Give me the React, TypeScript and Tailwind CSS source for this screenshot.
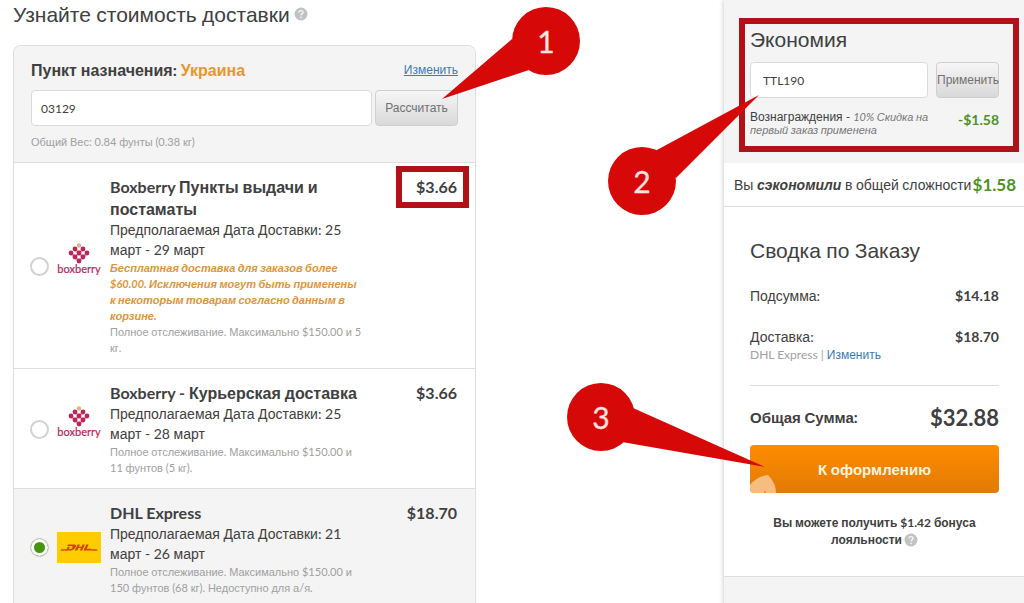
import React from 'react';
import { clsx } from 'clsx';

interface ShippingOption {
  id: string;
  title: string;
  dates: string;
  promo?: string;
  note: string;
  price: string;
  carrier: 'boxberry' | 'dhl';
  highlighted?: boolean;
}

const options: ShippingOption[] = [
  {
    id: 'pickup',
    title: 'Boxberry Пункты выдачи и постаматы',
    dates: 'Предполагаемая Дата Доставки: 25 март - 29 март',
    promo:
      'Бесплатная доставка для заказов более $60.00. Исключения могут быть применены к\u00a0некоторым товарам согласно данным в корзине.',
    note: 'Полное отслеживание. Максимально $150.00 и 5 кг.',
    price: '$3.66',
    carrier: 'boxberry',
    highlighted: true,
  },
  {
    id: 'courier',
    title: 'Boxberry - Курьерская доставка',
    dates: 'Предполагаемая Дата Доставки: 25 март - 28 март',
    note: 'Полное отслеживание. Максимально $150.00 и 11\u00a0фунтов (5 кг).',
    price: '$3.66',
    carrier: 'boxberry',
  },
  {
    id: 'dhl',
    title: 'DHL Express',
    dates: 'Предполагаемая Дата Доставки: 21 март - 26 март',
    note: 'Полное отслеживание. Максимально $150.00 и 150\u00a0фунтов (68 кг). Недоступно для а/я.',
    price: '$18.70',
    carrier: 'dhl',
  },
];

// Latin and digits are set in Lato, Cyrillic words in Liberation Sans
const Mixed: React.FC<{ text: string }> = ({ text }) => (
  <>
    {text.split(/([А-Яа-яЁё]+)/).map((part, i) =>
      i % 2 === 1 ? (
        <span key={i} className="leading-none font-['Liberation_Sans',sans-serif]">{part}</span>
      ) : (
        part
      )
    )}
  </>
);

const BoxberryLogo: React.FC = () => {
  const dots = [
    [18, 8], [26, 8], [14, 12], [22, 12], [30, 12], [18, 16], [26, 16], [22, 20],
  ];
  return (
    <svg viewBox="0 2 44 46" className="w-11 h-[46px]" role="img" aria-label="boxberry">
      <path d="M18 8l8 8M26 8l-8 8M14 12l8 8M30 12l-8 8" stroke="#eba3bb" strokeWidth="2.5" />
      <circle cx="22" cy="4.500" r="2.200" fill="#dcb878" />
      {dots.map(([cx, cy]) => (
        <circle key={`${cx}-${cy}`} cx={cx} cy={cy} r="2.400" fill="#bd2459" />
      ))}
      <text x="22" y="32" textAnchor="middle" fontSize="11" fill="#b8265d" stroke="#b8265d" strokeWidth="0.2" fontFamily="Lato, sans-serif">
        boxberry
      </text>
    </svg>
  );
};

const DhlLogo: React.FC = () => (
  <svg viewBox="0 0 44 31" className="w-11 h-[31px]" role="img" aria-label="DHL">
    <rect width="44" height="31" fill="#fc0" />
    <path d="M4 17.5h6M3.5 18.5h6M34 17.5h6M33.5 18.5h7" stroke="#d8401a" strokeWidth="0.7" />
    <g transform="translate(9 12.5)" fill="#d8401a">
      <path d="M2 0h6.5q2.2 0 1.2 2.6T5.5 6H0l1.8-3.8h2L3 4.6h1.6q1.2 0 1.8-1.5T6 1.6H1.3z" />
      <path d="M11.5 0h2.4l-1 2.2h2.6l1-2.2h2.4L16.2 6h-2.4l1.1-2.4h-2.6L11.2 6H8.8z" />
      <path d="M20.3 0h2.4l-2 4.3h4.5L24.5 6h-7z" />
    </g>
  </svg>
);

const HelpIcon: React.FC = () => (
  <svg viewBox="0 0 14 14" className="inline-block w-3.5 h-3.5" aria-hidden="true">
    <circle cx="7" cy="7" r="6.5" fill="#c2c2c2" />
    <path d="M5 5.6q0-2 2-2t2 1.8q0 1-1.2 1.6Q7 7.4 7 8.3" fill="none" stroke="#f4f4f4" strokeWidth="1.4" />
    <circle cx="7" cy="10.3" r="0.9" fill="#f4f4f4" />
  </svg>
);

interface CalloutProps {
  label: string;
  cx: number;
  cy: number;
  pointer: string;
}

const Callout: React.FC<CalloutProps> = ({ label, cx, cy, pointer }) => (
  <g>
    <polygon points={pointer} fill="#d60808" />
    <circle cx={cx} cy={cy} r="34" fill="#d60808" />
    <text x={cx} y={cy + 12} textAnchor="middle" fontSize="30" fill="#fbe4e0" stroke="#fbe4e0" strokeWidth="0.3" fontFamily="Lato, sans-serif">
      {label}
    </text>
  </g>
);

const OptionRow: React.FC<{ option: ShippingOption }> = ({ option }) => (
  <label
    htmlFor={option.id}
    className="flex items-center gap-2 border-t border-[#dedede] pt-[13px] pb-3 pl-4 pr-[18px] last:grow last:items-start has-checked:bg-[#f4f4f4] group"
  >
    <input
      type="radio"
      id={option.id}
      name="shipping"
      defaultChecked={option.id === 'dhl'}
      className="appearance-none w-[19px] h-[19px] shrink-0 rounded-full border-2 border-[#d2d2d2] bg-white checked:bg-[#45960f] checked:border checked:shadow-[inset_0_0_0_3px_#fff] group-last:mt-9"
    />
    <span className="w-11 shrink-0 group-last:mt-[30px]">
      {option.carrier === 'boxberry' ? <BoxberryLogo /> : <DhlLogo />}
    </span>
    <span className="flex flex-1 items-start justify-between self-stretch">
      <span className="block w-[258px] ml-px">
        <span className="block text-[16px] leading-[22px] font-bold">
          <Mixed text={option.title} />
        </span>
        <span className="block w-[240px] text-[14px] leading-5">
          <Mixed text={option.dates} />
        </span>
        {option.promo && (
          <span className="block text-[11px] leading-4 font-bold italic text-[#dc963c]">
            <Mixed text={option.promo} />
          </span>
        )}
        <span className="block text-[11px] leading-4 text-[#a0a0a0]">
          <Mixed text={option.note} />
        </span>
      </span>
      <span className="relative text-[16px] leading-[22px] font-bold">
        {option.price}
        {option.highlighted && (
          <span className="absolute -left-5 -right-3 -top-[10px] -bottom-[10px] border-6 border-[#b01217]" />
        )}
      </span>
    </span>
  </label>
);

const buttonClass =
  "h-9 rounded border border-[#cfcfcf] bg-linear-to-b from-[#f6f6f6] to-[#d9d9d9] text-[#707070] whitespace-nowrap font-['Liberation_Sans',sans-serif]";

const ShippingCalculator: React.FC = () => (
  <main className="flex flex-col">
    <h1 className="flex items-center gap-1 h-7 mb-[17px] text-[21px] leading-7 whitespace-nowrap">
      <span>
        <Mixed text="Узнайте стоимость доставки" />
      </span>
      <HelpIcon />
    </h1>
    <section className="flex flex-col grow border border-b-0 border-[#dedede] rounded-t-lg bg-white overflow-hidden">
      <div className="bg-[#f4f4f4] pt-3 px-[17px] pb-3">
        <div className="flex items-center justify-between h-6 mb-2">
          <label htmlFor="zip" className="text-[16px] font-bold">
            <Mixed text="Пункт назначения: " />
            <span className="text-[#e8962e]">
              <Mixed text="Украина" />
            </span>
          </label>
          <a href="#country" className="text-[12px] text-[#3d79b5] underline">
            <Mixed text="Изменить" />
          </a>
        </div>
        <div className="flex gap-[3px] mb-2">
          <input
            id="zip"
            defaultValue="03129"
            className="grow min-w-0 h-9 px-[9px] rounded border border-[#dadada] bg-white text-[12px]"
          />
          <button type="button" className={clsx(buttonClass, 'w-[83px] text-[12px]')}>Рассчитать</button>
        </div>
        <p className="text-[11px] leading-4 text-[#a0a0a0]">
          <Mixed text="Общий Вес: 0.84 фунты (0.38 кг)" />
        </p>
      </div>
      {options.map((option) => (
        <OptionRow key={option.id} option={option} />
      ))}
    </section>
  </main>
);

const OrderSummary: React.FC = () => (
  <aside className="col-start-3 flex flex-col bg-[#f4f4f4] shadow-[-1px_0_4px_rgba(0,0,0,0.18)]">
    <section className="relative pt-6 pb-[27px] pl-[26px] pr-[25px]">
      <h2 className="text-[21px] leading-[30px] mb-2">
        <label htmlFor="coupon">
          <Mixed text="Экономия" />
        </label>
      </h2>
      <div className="flex gap-2 mb-3">
        <input
          id="coupon"
          defaultValue="TTL190"
          className="grow min-w-0 h-9 px-3 rounded border border-[#dadada] bg-white text-[12px]"
        />
        <button type="button" className={clsx(buttonClass, 'w-[63px] text-[12px]')}>Применить</button>
      </div>
      <div className="flex justify-between">
        <p className="w-[185px] text-[12px] leading-[13px]">
          <Mixed text="Вознаграждения - " />
          <em className="text-[11px] leading-none text-[#777]">
            <Mixed text="10% Скидка на первый заказ применена" />
          </em>
        </p>
        <span className="text-[14px] leading-5 font-bold text-[#4f9124]">-$1.58</span>
      </div>
      <div className="absolute left-[15px] right-[5px] top-[18px] bottom-[11px] border-6 border-[#b01217] pointer-events-none" />
    </section>
    <p className="h-11 pl-2.5 pr-2 flex items-center justify-between bg-white border-b border-[#dedede] whitespace-nowrap">
      <span className="text-[14px]">
        <Mixed text="Вы " />
        <strong className="italic">
          <Mixed text="сэкономили" />
        </strong>
        <Mixed text=" в общей сложности" />
      </span>
      <span className="text-[17px] font-bold text-[#4f9124]">$1.58</span>
    </p>
    <section className="bg-white border-b border-[#dedede] pt-7 pb-7 pl-[26px] pr-[25px]">
      <h2 className="text-[21px] leading-[30px] mb-[21px]">
        <Mixed text="Сводка по Заказу" />
      </h2>
      <dl className="text-[14px] leading-5">
        <div className="flex justify-between mb-[21px]">
          <dt><Mixed text="Подсумма:" /></dt>
          <dd className="font-bold">$14.18</dd>
        </div>
        <div className="flex justify-between">
          <dt><Mixed text="Доставка:" /></dt>
          <dd className="font-bold">$18.70</dd>
        </div>
      </dl>
      <p className="text-[12px] leading-4 text-[#a0a0a0] pb-[22px] mb-[17px] border-b border-[#dedede]">
        DHL Express |{' '}
        <a href="#shipping" className="text-[#3d79b5]">
          <Mixed text="Изменить" />
        </a>
      </p>
      <div className="flex items-center justify-between h-7 mb-[14px] font-bold">
        <span className="text-[15px]">
          <Mixed text="Общая Сумма:" />
        </span>
        <span className="text-[22px]">$32.88</span>
      </div>
      <button
        type="button"
        className="relative block w-full h-12 rounded-sm overflow-hidden bg-linear-to-b from-[#fe8c00] to-[#e27a04] text-[15px] text-[#fff4dc] font-bold"
      >
        <Mixed text="К оформлению" />
        <svg viewBox="0 0 26 18" className="absolute left-0 bottom-0 w-[26px] h-[18px]" aria-hidden="true">
          <path d="M0 10Q7 1 18 0q8 8 8 18H0z" fill="#f6bd80" />
          <path d="M14 18l1-3 1 3z" fill="#e88a24" />
        </svg>
      </button>
      <p className="mt-[21px] text-center text-[12px] leading-[17px] font-bold">
        <Mixed text="Вы можете получить $1.42 бонуса" />
        <br />
        <span className="inline-flex items-center gap-0.5">
          <Mixed text="лояльности" />
          <HelpIcon />
        </span>
      </p>
    </section>
  </aside>
);

export default function App() {
  return (
    <div className="relative grid grid-cols-[minmax(0,463fr)_minmax(0,248fr)_minmax(0,300fr)] min-h-screen pl-[13px] bg-white text-[#404040] font-[Lato,'Liberation_Sans',sans-serif] overflow-hidden">
      <ShippingCalculator />
      <OrderSummary />
      <svg viewBox="0 0 1024 603" className="absolute left-0 top-0 w-full pointer-events-none">
        <Callout label="1" cx={546} cy={41} pointer="512,39 442,99 529,70" />
        <Callout label="2" cx={642} cy={181} pointer="655,151 759,95 676,178" />
        <Callout label="3" cx={601} cy={417} pointer="633,408 765,467 622,442" />
      </svg>
    </div>
  );
}
